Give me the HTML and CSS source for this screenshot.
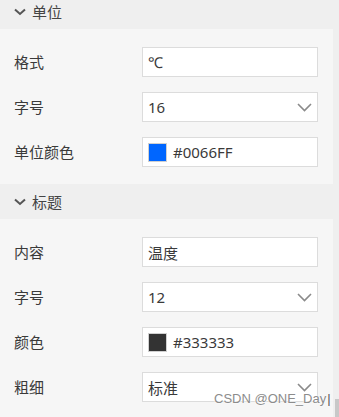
FILE: index.html
```html
<!DOCTYPE html>
<html lang="zh-CN">
<head>
  <meta charset="UTF-8">
  <meta name="viewport" content="width=device-width, initial-scale=1.0">
  <title>属性面板</title>
  <link rel="stylesheet" href="styles.css">
</head>
<body>

  <div class="panel">
    <div class="section-head">
      <svg class="arrow" width="12" height="8" viewBox="0 0 12 8"><polyline points="1,1.5 6,6 11,1.5" fill="none" stroke="#555" stroke-width="2"/></svg>
      <span>单位</span>
    </div>
    <div class="section-body">
      <div class="row">
        <label>格式</label>
        <div class="field">℃</div>
      </div>
      <div class="row">
        <label>字号</label>
        <div class="field select">16
          <svg class="caret" width="15" height="9" viewBox="0 0 15 9"><polyline points="1,1 7.5,7.5 14,1" fill="none" stroke="#8a8a8a" stroke-width="1.6"/></svg>
        </div>
      </div>
      <div class="row">
        <label>单位颜色</label>
        <div class="field"><span class="swatch" style="background:#0066ff"></span>#0066FF</div>
      </div>
    </div>

    <div class="section-head">
      <svg class="arrow" width="12" height="8" viewBox="0 0 12 8"><polyline points="1,1.5 6,6 11,1.5" fill="none" stroke="#555" stroke-width="2"/></svg>
      <span>标题</span>
    </div>
    <div class="section-body">
      <div class="row">
        <label>内容</label>
        <div class="field">温度</div>
      </div>
      <div class="row">
        <label>字号</label>
        <div class="field select">12
          <svg class="caret" width="15" height="9" viewBox="0 0 15 9"><polyline points="1,1 7.5,7.5 14,1" fill="none" stroke="#8a8a8a" stroke-width="1.6"/></svg>
        </div>
      </div>
      <div class="row">
        <label>颜色</label>
        <div class="field"><span class="swatch" style="background:#333333"></span>#333333</div>
      </div>
      <div class="row">
        <label>粗细</label>
        <div class="field select">标准
          <svg class="caret" width="15" height="9" viewBox="0 0 15 9"><polyline points="1,1 7.5,7.5 14,1" fill="none" stroke="#8a8a8a" stroke-width="1.6"/></svg>
        </div>
      </div>
    </div>
  </div>

  <div class="watermark">CSDN @ONE_Day<span class="cursor">|</span></div>
  <div class="scroll-thumb"></div>

</body>
</html>
```

FILE: styles.css
```css
body {
  margin: 0;
  background-color: #efefef;
  font-family: "Noto Sans", "Noto Sans CJK SC", sans-serif;
  font-size: 15px;
  color: #3a3a3a;
  overflow: hidden;
  height: 417px;
}

.panel {
  width: 333px;
  margin-top: -6px;
}

.section-head {
  height: 35px;
  display: flex;
  align-items: center;
  gap: 6px;
  padding-left: 14px;
  background-color: #efefef;
  color: #444;
}

.arrow {
  display: block;
}

.section-body {
  background-color: #f6f6f6;
  padding: 18px 0 17px;
  display: flex;
  flex-direction: column;
  gap: 15px;
}

.row {
  display: flex;
  align-items: center;
  padding-left: 14px;
}

.row label {
  width: 128px;
  flex-shrink: 0;
  margin-top: -2px;
}

.field {
  box-sizing: border-box;
  width: 176px;
  height: 30px;
  border: 1px solid #dcdcdc;
  background-color: #fff;
  padding: 0 5px;
  display: flex;
  align-items: center;
  gap: 6px;
}

.select {
  justify-content: space-between;
}

.caret {
  display: block;
}

.swatch {
  box-sizing: border-box;
  width: 19px;
  height: 19px;
  border: 1px solid #d0d0d0;
}

.watermark {
  position: absolute;
  left: 214px;
  top: 391px;
  white-space: nowrap;
  font-family: "Liberation Sans", Arial, sans-serif;
  font-size: 13px;
  color: #8c8c8c;
  text-shadow: 0 0 2px #fff, 0 0 2px #fff;
}

.cursor {
  color: #555;
  margin-left: 1px;
}

.scroll-thumb {
  position: absolute;
  right: 0;
  top: 399px;
  width: 4px;
  height: 18px;
  background-color: #c8c8c8;
}
```
